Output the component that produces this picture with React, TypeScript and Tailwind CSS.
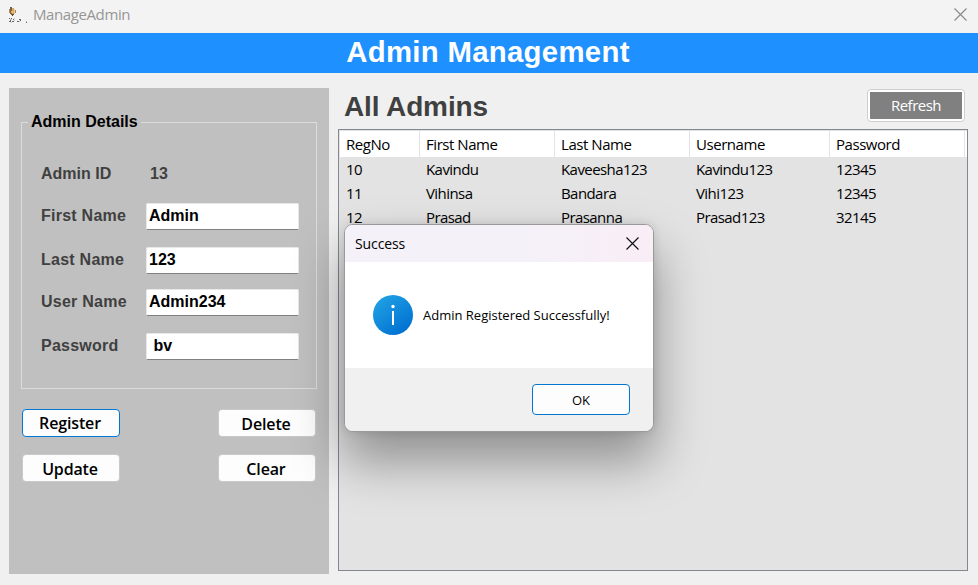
import type { ReactNode } from 'react';

const arial = "font-['Liberation_Sans',Arial,sans-serif]";
const segoe = "font-['Open_Sans','Noto_Sans',sans-serif]";

const admins = [
  ['10', 'Kavindu', 'Kaveesha123', 'Kavindu123', '12345'],
  ['11', 'Vihinsa', 'Bandara', 'Vihi123', '12345'],
  ['12', 'Prasad', 'Prasanna', 'Prasad123', '32145'],
];

const columns = ['RegNo', 'First Name', 'Last Name', 'Username', 'Password'];
const grid = 'grid grid-cols-[80px_135px_135px_140px_135px]';

function AppIcon() {
  return (
    <svg className="mt-[3px]" width="20" height="18" viewBox="0 0 20 18" shapeRendering="crispEdges">
      <path d="M2 0h2v2H2z" fill="#6b625c" />
      <path d="M1 2h1v4H1z" fill="#a58a6a" />
      <path d="M2 2h2v5H2z" fill="#8f6230" />
      <path d="M4 1h2v6H4z" fill="#d9a860" />
      <path d="M6 2h1v5H6z" fill="#e9cfa6" />
      <path d="M7 3h1v3H7z" fill="#a88758" />
      <path d="M3 4h2v2H3z" fill="#e3b878" />
      <path d="M3 7h3v1H3z" fill="#70482c" />
      <path d="M4 8h1v1H4z" fill="#4a3a35" />
      <path d="M1 11h1v1H1zM3 11h1v1H3zM5 12h1v1H5zM2 13h1v1H2zM1 14h2v1H1zM4 14h2v1H4zM11 12h2v1h-2zM9 14h2v1H9zM12 13h1v1h-1zM18 15h1v1h-1z" fill="#6a6468" />
      <path d="M2 12h2v1H2zM6 11h1v1H6zM3 15h1v1H3zM6 13h1v1H6zM11 14h1v1h-1zM18 14h1v1h-1z" fill="#c4bec1" />
    </svg>
  );
}

function CloseIcon({ color, size }: { color: string; size: number }) {
  return (
    <svg width={size} height={size} viewBox="0 0 13 13" stroke={color} strokeWidth="1.15" fill="none">
      <path d="M.5.5l12 12M12.5.5l-12 12" />
    </svg>
  );
}

function Field({ label, value, gap }: { label: string; value: string; gap: string }) {
  return (
    <div className={`flex h-[27px] items-center ${gap}`}>
      <label className="w-[105px] pb-0.5 tracking-[0.25px] text-[#404040]">{label}</label>
      <div className="flex h-[27px] w-[153px] items-center whitespace-pre rounded-[2px] border border-b-[#808080] border-[#e8e8e8] bg-white px-[2px] pb-0.5">
        {value}
      </div>
    </div>
  );
}

function PanelButton({ children, focused = false }: { children: ReactNode; focused?: boolean }) {
  return (
    <button
      className={`h-7 w-[98px] rounded-[4px] border bg-[#fdfdfd] pr-[2px] text-[16px] font-semibold tracking-[-0.15px] ${segoe} ${
        focused ? 'border-[#0078d4] leading-[26px]' : 'border-[#c9c9c9] pt-px leading-[27px]'
      }`}
    >
      {children}
    </button>
  );
}

function SuccessDialog() {
  return (
    <div
      className={`absolute top-[224px] left-[344px] flex h-[208px] w-[310px] flex-col overflow-hidden rounded-[9px] border border-[#999] bg-white ${segoe} shadow-[0_0_10px_rgba(0,0,0,0.12),0_28px_50px_2px_rgba(0,0,0,0.36)]`}
    >
      <div className="flex h-[37px] shrink-0 items-center justify-between bg-linear-to-r from-[#f5f1f8] from-60% to-[#f9edf6] pr-[14.5px] pl-[10px] text-[14px]">
        <span className="tracking-[-0.1px]">Success</span>
        <CloseIcon color="#111" size={13} />
      </div>
      <div className="flex h-[106px] shrink-0 items-center gap-[10px] pl-7">
        <svg width="40" height="40" viewBox="0 0 40 40">
          <defs>
            <linearGradient id="info" x1="0.15" y1="0.1" x2="0.8" y2="0.95">
              <stop offset="0" stopColor="#1f9fe3" />
              <stop offset="1" stopColor="#0070d2" />
            </linearGradient>
          </defs>
          <circle cx="20" cy="20" r="20" fill="url(#info)" />
          <circle cx="20" cy="11.5" r="1.7" fill="#fff" />
          <path d="M19 16h2v14h-2z" fill="#fff" />
        </svg>
        <span className="pt-[2px] text-[13px]">Admin Registered Successfully!</span>
      </div>
      <div className="flex flex-1 items-start justify-end bg-[#f0f0f0] pt-4 pr-[23px]">
        <button className="h-[31px] w-[98px] rounded-[4px] border border-[#0078d4] bg-[#fdfdfd] pt-[2px] text-[13px]">OK</button>
      </div>
    </div>
  );
}

export default function App() {
  return (
    <div className="relative flex h-[585px] w-[978px] flex-col overflow-hidden bg-[#f0f0f0] text-black">
      <header className="flex h-[33px] shrink-0 items-center bg-[#f3f3f3] pr-[11.5px] pb-[4px] pl-[8px]">
        <AppIcon />
        <span className={`ml-[5px] flex-1 text-[15px] tracking-[-0.4px] text-[#969696] ${segoe}`}>ManageAdmin</span>
        <CloseIcon color="#8a8a8a" size={13} />
      </header>
      <h1 className={`flex h-10 shrink-0 items-center justify-center bg-[#1e90ff] pr-[2px] pb-[2px] text-[29.33px] font-bold tracking-[0.3px] text-white ${arial}`}>
        Admin Management
      </h1>

      <main className="flex flex-1 gap-[9px] pt-[15px] pr-[10px] pl-[9px]">
        <section className={`h-[486px] w-[320px] bg-[#c0c0c0] pt-[25px] pl-3 text-[16px] font-bold ${arial}`}>
          <fieldset className="h-[276px] w-[296px] border border-[#dcdcdc] pl-[6px]">
            <legend className="h-[18px] px-[3px] leading-[17px]">Admin Details</legend>
            <div className="flex h-[54px] items-end pl-[13px] leading-[22px] text-[#404040]">
              <span className="w-[109px]">Admin ID</span>
              <span>13</span>
            </div>
            <div className="pl-[13px]">
              <Field label="First Name" value="Admin" gap="mt-[18px]" />
              <Field label="Last Name" value="123" gap="mt-[17px]" />
              <Field label="User Name" value="Admin234" gap="mt-[15px]" />
              <Field label="Password" value=" bv" gap="mt-[17px]" />
            </div>
          </fieldset>
          <div className="mt-5 ml-[1px] grid w-[294px] grid-cols-[98px_98px] justify-between gap-y-[17px]">
            <PanelButton focused>Register</PanelButton>
            <PanelButton>Delete</PanelButton>
            <PanelButton>Update</PanelButton>
            <PanelButton>Clear</PanelButton>
          </div>
        </section>

        <section className="flex h-[483px] w-[630px] flex-col">
          <div className="flex h-[41px] shrink-0 items-start justify-between pr-[3px] pl-[6px]">
            <h2 className={`text-[28px] leading-[37px] font-bold tracking-[-0.12px] text-[#404040] ${arial}`}>All Admins</h2>
            <button className="mt-[1px] h-[33px] w-[98px] rounded-[4px] border border-[#cfcfcf] bg-white p-[2px]">
              <span className={`flex h-full items-center justify-center bg-[#808080] text-[15px] tracking-[-0.5px] text-white ${segoe}`}>
                Refresh
              </span>
            </button>
          </div>
          <div className={`flex-1 border border-[#828790] bg-[#e3e3e3] text-[15px] tracking-[-0.57px] ${segoe}`}>
            <div className="border-t border-l border-[#e3e3e3] bg-white">
              <div className={`${grid} h-[26px] leading-[26px]`}>
                {columns.map((column) => (
                  <span key={column} className="border-r border-[#e3e3e3] pl-[6px] tracking-[-0.45px]">
                    {column}
                  </span>
                ))}
              </div>
            </div>
            {admins.map((row) => (
              <div key={row[0]} className={`${grid} h-6 pl-[1px] leading-[25px]`}>
                {row.map((cell, i) => (
                  <span key={i} className="pl-[6px]">
                    {cell}
                  </span>
                ))}
              </div>
            ))}
          </div>
        </section>
      </main>
      <SuccessDialog />
    </div>
  );
}
